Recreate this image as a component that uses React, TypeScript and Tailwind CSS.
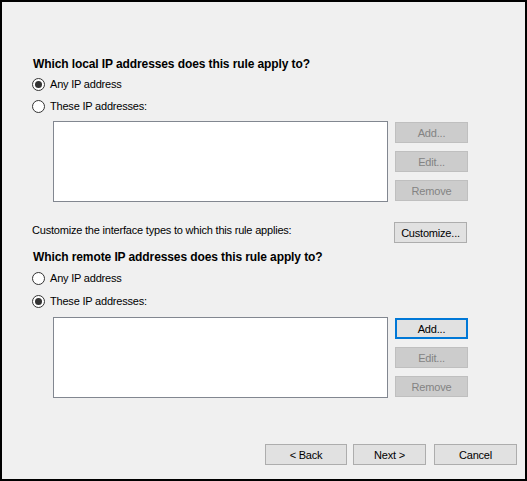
import React from "react";

const font = { fontFamily: '"Liberation Sans", Arial, sans-serif' };

function Radio({ checked, label }: { checked: boolean; label: string }) {
  return (
    <div className="flex items-center h-[16px]">
      <div className="w-[13px] h-[13px] rounded-full border border-[#333333] bg-white flex items-center justify-center">
        {checked && <div className="w-[7px] h-[7px] rounded-full bg-[#333333]" />}
      </div>
      <span className="ml-[5px] text-[11px] tracking-[-0.2px] leading-[16px] text-black">{label}</span>
    </div>
  );
}

function Btn({
  label,
  disabled,
  focused,
  w = "w-[73px]",
}: {
  label: string;
  disabled?: boolean;
  focused?: boolean;
  w?: string;
}) {
  const base = `${w} h-[21px] flex items-center justify-center text-[11px] tracking-[-0.2px] leading-[16px]`;
  if (disabled)
    return <div className={`${base} bg-[#cccccc] border border-[#bfbfbf] text-[#838383]`}>{label}</div>;
  if (focused)
    return <div className={`${base} bg-[#e1e1e1] border-2 border-[#0078d7] text-black`}>{label}</div>;
  return <div className={`${base} bg-[#e1e1e1] border border-[#adadad] text-black`}>{label}</div>;
}

function ListWithButtons({ focusedAdd }: { focusedAdd?: boolean }) {
  return (
    <div className="flex ml-[21px]">
      <div className="w-[335px] h-[81px] bg-white border border-[#828790]" />
      <div className="ml-[7px] mt-[1px] flex flex-col gap-[8px]">
        <Btn label="Add..." disabled={!focusedAdd} focused={focusedAdd} />
        <Btn label="Edit..." disabled />
        <Btn label="Remove" disabled />
      </div>
    </div>
  );
}

export default function App() {
  return (
    <div
      className="w-[527px] h-[481px] border-2 border-black bg-[#f0f0f0] flex flex-col text-black"
      style={font}
    >
      <div className="ml-[30px] mt-[54px] flex flex-col">
        <div className="ml-[1px] text-[12px] tracking-[-0.1px] leading-[16px] font-bold">
          Which local IP addresses does this rule apply to?
        </div>
        <div className="mt-[4px]">
          <Radio checked label="Any IP address" />
        </div>
        <div className="mt-[6px]">
          <Radio checked={false} label="These IP addresses:" />
        </div>
        <div className="mt-[7px]">
          <ListWithButtons />
        </div>
        <div className="mt-[20px] flex items-start">
          <div className="w-[362px] text-[11px] tracking-[-0.2px] leading-[16px]">
            Customize the interface types to which this rule applies:
          </div>
          <Btn label="Customize..." />
        </div>
        <div className="mt-[6px] ml-[1px] text-[12px] tracking-[-0.1px] leading-[16px] font-bold">
          Which remote IP addresses does this rule apply to?
        </div>
        <div className="mt-[5px]">
          <Radio checked={false} label="Any IP address" />
        </div>
        <div className="mt-[7px]">
          <Radio checked label="These IP addresses:" />
        </div>
        <div className="mt-[8px]">
          <ListWithButtons focusedAdd />
        </div>
      </div>
      <div className="mt-auto mb-[14px] ml-[263px] flex">
        <Btn label="< Back" w="w-[82px]" />
        <div className="ml-[6px]">
          <Btn label="Next >" w="w-[73px]" />
        </div>
        <div className="ml-[8px]">
          <Btn label="Cancel" w="w-[83px]" />
        </div>
      </div>
    </div>
  );
}
